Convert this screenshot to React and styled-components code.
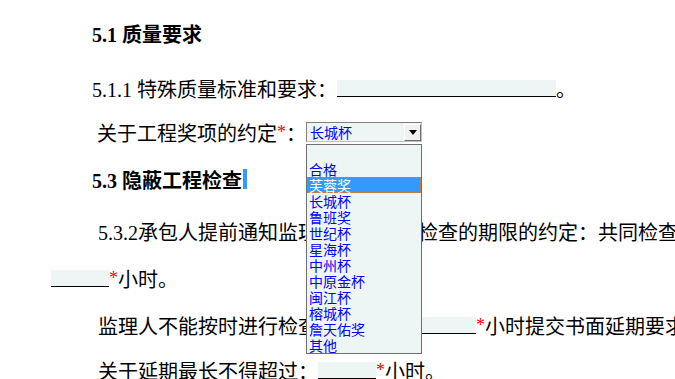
import React from 'react'
import styled, { createGlobalStyle } from 'styled-components'

const GlobalStyle = createGlobalStyle`
    html, body {
        margin: 0;
        padding: 0;
        background: #fff;
        overflow: hidden;
    }
`;

const Page = styled.div`
    width: 1100px;
    height: 379px;
    padding-top: 21px;
    box-sizing: border-box;
    font-family: 'Liberation Serif', 'Noto Sans CJK SC', serif;
    font-size: 20px;
    color: #000;
`;

const Line = styled.div`
    display: flex;
    align-items: center;
    height: 24px;
    margin-top: ${p => p.$gap || 0}px;
    padding-left: ${p => p.$indent}px;
    white-space: nowrap;
    font-weight: ${p => p.$bold ? 'bold' : 'normal'};
`;

const Blank = styled.span`
    display: inline-block;
    width: ${p => p.$w}px;
    height: 16px;
    background: #edf5f5;
    border-bottom: 1px solid #000;
`;

const Star = styled.span`
    color: #ff0000;
    font-size: 18px;
`;

const Caret = styled.span`
    display: inline-block;
    width: 4px;
    height: 20px;
    margin-left: 1px;
    background: #3399ff;
`;

const SelectWrap = styled.span`
    position: relative;
    display: inline-block;
    font-family: 'Noto Sans CJK SC', sans-serif;
    font-weight: normal;
`;

const SelectBox = styled.div`
    width: 116px;
    height: 20px;
    box-sizing: border-box;
    border: 1px solid #808080;
    border-right-color: #c0c0c0;
    border-bottom-color: #c0c0c0;
    background: #edf5f5;
    display: flex;
    align-items: center;
    justify-content: space-between;
    padding-left: 3px;
    font-size: 14px;
    line-height: 18px;
    color: #0000ff;
`;

const ArrowBtn = styled.span`
    width: 17px;
    height: 17px;
    box-sizing: border-box;
    background: #f0f0f0;
    border: 1px solid #fff;
    border-right-color: #707070;
    border-bottom-color: #707070;
    display: flex;
    align-items: center;
    justify-content: center;
`;

const Popup = styled.ul`
    position: absolute;
    top: 22px;
    left: 0;
    width: 116px;
    box-sizing: border-box;
    margin: 0;
    padding: 0;
    list-style: none;
    background: #edf5f5;
    border: 1px solid #707070;
    z-index: 5;
`;

const Option = styled.li`
    height: 16px;
    box-sizing: border-box;
    padding-left: 1px;
    font-size: 14px;
    line-height: 15px;
    color: ${p => p.$active ? '#fff' : '#0000ff'};
    background: ${p => p.$active ? '#3399ff' : 'transparent'};
    border: 1px dotted ${p => p.$active ? '#c08040' : 'transparent'};
`;

const awards = ['', '合格', '芙蓉奖', '长城杯', '鲁班奖', '世纪杯', '星海杯', '中州杯', '中原金杯', '闽江杯', '榕城杯', '詹天佑奖', '其他'];

export default function App() {
    return (
        <Page>
            <GlobalStyle />
            <Line $indent={92} $bold>5.1 质量要求</Line>
            <Line $indent={92} $gap={31}>
                5.1.1 特殊质量标准和要求：<Blank $w={219} />。
            </Line>
            <Line $indent={97} $gap={20}>
                关于工程奖项的约定<Star>*</Star>：
                <SelectWrap>
                    <SelectBox>
                        长城杯
                        <ArrowBtn>
                            <svg width="8" height="5" viewBox="0 0 8 5">
                                <path d="M0 0 L8 0 L4 5 Z" fill="#000" />
                            </svg>
                        </ArrowBtn>
                    </SelectBox>
                    <Popup>
                        {awards.map((a, i) => (
                            <Option key={i} $active={a === '芙蓉奖'}>{a}</Option>
                        ))}
                    </Popup>
                </SelectWrap>
            </Line>
            <Line $indent={92} $gap={23} $bold>5.3 隐蔽工程检查<Caret /></Line>
            <Line $indent={98} $gap={28}>
                5.3.2承包人提前通知监理人隐蔽工程检查的期限的约定：共同检查前应通知监理人
            </Line>
            <Line $indent={51} $gap={23}>
                <Blank $w={58} /><Star>*</Star>小时。
            </Line>
            <Line $indent={98} $gap={23}>
                监理人不能按时进行检查的，应提前<Blank $w={58} /><Star>*</Star>小时提交书面延期要求。
            </Line>
            <Line $indent={98} $gap={21}>
                关于延期最长不得超过：<Blank $w={58} /><Star>*</Star>小时。
            </Line>
        </Page>
    )
}
